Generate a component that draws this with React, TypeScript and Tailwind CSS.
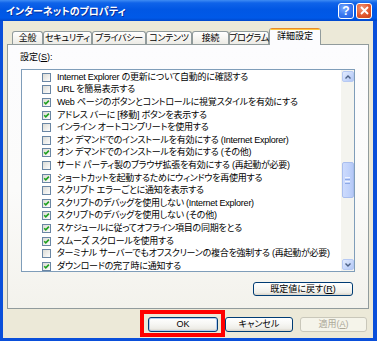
import React from 'react';

const items: [string, boolean][] = [
  ['Internet Explorer の更新について自動的に確認する', false],
  ['URL を簡易表示する', false],
  ['Web ページのボタンとコントロールに視覚スタイルを有効にする', true],
  ['アドレス バーに [移動] ボタンを表示する', true],
  ['インライン オートコンプリートを使用する', false],
  ['オン デマンドでのインストールを有効にする (Internet Explorer)', false],
  ['オン デマンドでのインストールを有効にする (その他)', true],
  ['サード パーティ製のブラウザ拡張を有効にする (再起動が必要)', false],
  ['ショートカットを起動するためにウィンドウを再使用する', true],
  ['スクリプト エラーごとに通知を表示する', false],
  ['スクリプトのデバッグを使用しない (Internet Explorer)', true],
  ['スクリプトのデバッグを使用しない (その他)', true],
  ['スケジュールに従ってオフライン項目の同期をとる', true],
  ['スムーズ スクロールを使用する', true],
  ['ターミナル サーバーでもオフスクリーンの複合を強制する (再起動が必要)', false],
  ['ダウンロードの完了時に通知する', true],
];

const tabs: [string, string][] = [
  ['全般', 'w-[31px]'],
  ['セキュリティ', 'w-[49px]'],
  ['プライバシー', 'w-[54px]'],
  ['コンテンツ', 'w-[46px]'],
  ['接続', 'w-[37px]'],
  ['プログラム', 'w-[40px]'],
];

function Check({ checked }: { checked: boolean }) {
  return (
    <svg width="9" height="9" viewBox="0 0 9 9" className="shrink-0">
      <defs>
        <linearGradient id="cbg" x1="0" y1="0" x2="1" y2="1">
          <stop offset="0" stopColor="#D9D9D3" />
          <stop offset="1" stopColor="#FFFFFF" />
        </linearGradient>
      </defs>
      <rect x="0.5" y="0.5" width="8" height="8" fill="url(#cbg)" stroke="#6A86A4" />
      {checked && (
        <path d="M2.2 4.2 L3.8 5.9 L6.9 2.6" stroke="#21A121" strokeWidth="1.6" fill="none" />
      )}
    </svg>
  );
}

function Arrow({ up }: { up: boolean }) {
  return (
    <div className="w-[12px] h-[11px] rounded-[2px] border border-[#B6C9F3] bg-[linear-gradient(135deg,#E3ECFE_0%,#C4D5FA_60%,#B3C7F4_100%)] flex items-center justify-center shrink-0">
      <svg width="6" height="4" viewBox="0 0 6 4">
        <path d={up ? 'M0.5 3.5 L3 1 L5.5 3.5' : 'M0.5 0.5 L3 3 L5.5 0.5'} stroke="#4D6185" strokeWidth="1.4" fill="none" />
      </svg>
    </div>
  );
}

export default function App() {
  return (
    <div className="w-[377px] h-[341px] flex flex-col bg-[#0A4FDA] overflow-hidden text-black font-['Liberation_Sans','Noto_Sans_CJK_JP',sans-serif] [font-feature-settings:'palt']">
      {/* Title bar */}
      <div className="h-[21px] shrink-0 flex items-center pl-[6px] pr-[5px] bg-[linear-gradient(180deg,#3F8CF3_0%,#0F63E9_14%,#0157E4_45%,#0059E8_85%,#0047CC_100%)]">
        <span className="flex-1 text-white font-bold text-[10px] leading-none font-['Noto_Sans_CJK_JP',sans-serif] [text-shadow:1px_1px_0_#0B2E9A]">
          インターネットのプロパティ
        </span>
        <div className="flex gap-[2px]">
          <div className="w-[16px] h-[16px] rounded-[3px] border border-white bg-[radial-gradient(circle_at_35%_30%,#7AAAFF_0%,#3A78F0_50%,#1F5BE0_100%)] flex items-center justify-center text-white font-bold text-[12px] leading-none font-['Liberation_Sans',sans-serif]">
            ?
          </div>
          <div className="w-[16px] h-[16px] rounded-[3px] border border-white bg-[radial-gradient(circle_at_35%_30%,#F0977A_0%,#E2582E_55%,#C4401A_100%)] flex items-center justify-center">
            <svg width="9" height="9" viewBox="0 0 9 9">
              <path d="M1 1 L8 8 M8 1 L1 8" stroke="white" strokeWidth="1.8" />
            </svg>
          </div>
        </div>
      </div>

      {/* Body */}
      <div className="flex-1 ml-[3px] mr-[4px] mb-[3px] bg-[#ECE9D8] flex flex-col pl-[4px] pt-[7px]">
        {/* Tabs */}
        <div className="flex items-end h-[16px] ml-[5px] relative z-10">
          {tabs.map(([t, w]) => (
            <div
              key={t}
              className={`${w} h-[13px] shrink-0 rounded-t-[3px] border-t border-x border-[#919B9C] bg-[linear-gradient(180deg,#FFFFFF_0%,#F6F5F1_50%,#ECEBE6_100%)] flex items-center justify-center text-[9px] leading-none tracking-[-0.3px] whitespace-nowrap`}
            >
              {t}
            </div>
          ))}
          <div className="w-[52px] h-[17px] mb-[-1px] shrink-0 rounded-t-[3px] border-x border-[#919B9C] bg-[#FCFCFE] flex flex-col overflow-hidden">
            <div className="h-[1px] bg-[#E68B2C] shrink-0" />
            <div className="h-[1px] bg-[#FFC83C] shrink-0" />
            <div className="flex-1 flex items-center justify-center text-[9px] leading-none whitespace-nowrap pb-[2px]">
              詳細設定
            </div>
          </div>
        </div>

        {/* Panel */}
        <div className="h-[265px] w-[362px] shrink-0 border border-[#919B9C] bg-[linear-gradient(180deg,#FCFCFE_0%,#FBFBFA_55%,#F3F2EC_100%)] flex flex-col pl-[12px] pt-[7px]">
          <div className="text-[9px] leading-[10px] h-[10px]">
            設定(<span className="underline">S</span>):
          </div>
          <div className="mt-[7px] ml-[1px] w-[334px] h-[203px] border border-[#7F9DB9] bg-white flex overflow-hidden shrink-0">
            <div className="flex-1 pt-[1px] overflow-hidden">
              {items.map(([t, c]) => (
                <div key={t} className="h-[12.6px] flex items-center pl-[20px] gap-[6px] whitespace-nowrap text-[9px] leading-none tracking-[-0.25px]">
                  <Check checked={c} />
                  <span>{t}</span>
                </div>
              ))}
            </div>
            <div className="w-[13px] h-full bg-[#F4F4EF] flex flex-col items-center py-[1px] shrink-0">
              <Arrow up={true} />
              <div className="mt-[80px] w-[12px] h-[36px] rounded-[2px] border border-[#A9BEEE] bg-[linear-gradient(90deg,#CDDBFD_0%,#C0D2FB_60%,#B4C8F6_100%)] flex flex-col items-center justify-center gap-[1px] shrink-0">
                <div className="w-[5px] h-[1px] bg-[#EEF3FF]" />
                <div className="w-[5px] h-[1px] bg-[#8DA9E6]" />
                <div className="w-[5px] h-[1px] bg-[#EEF3FF]" />
                <div className="w-[5px] h-[1px] bg-[#8DA9E6]" />
              </div>
              <div className="flex-1" />
              <Arrow up={false} />
            </div>
          </div>
          <div className="mt-[10px] w-[334px] ml-[1px] flex justify-end pr-[2px]">
            <div className="w-[100px] h-[14px] rounded-[3px] border border-[#003C74] bg-[linear-gradient(180deg,#FFFFFF_0%,#F7F7F4_45%,#EEEDE8_80%,#D8D3C8_100%)] flex items-center justify-center text-[9px] leading-none">
              既定値に戻す(<span className="underline">R</span>)
            </div>
          </div>
        </div>

        {/* Footer buttons */}
        <div className="mt-[8px] flex justify-end gap-[7px] pr-[6px]">
          <div className="relative w-[70px] h-[15px]">
            <div className="w-full h-full rounded-[3px] border border-[#003C74] bg-[linear-gradient(180deg,#FFFFFF_0%,#F7F7F4_45%,#EEEDE8_80%,#D8D3C8_100%)] shadow-[inset_0_0_0_1px_#B4CCF2] flex items-center justify-center text-[9px] leading-none">
              OK
            </div>
            <div className="absolute -left-[8px] -top-[7px] -right-[7px] -bottom-[5px] border-[4px] border-[#FF0000]" />
          </div>
          <div className="w-[68px] h-[15px] rounded-[3px] border border-[#003C74] bg-[linear-gradient(180deg,#FFFFFF_0%,#F7F7F4_45%,#EEEDE8_80%,#D8D3C8_100%)] flex items-center justify-center text-[9px] leading-none">
            キャンセル
          </div>
          <div className="w-[67px] h-[15px] rounded-[3px] border border-[#C9C7BA] bg-[#F5F4EA] flex items-center justify-center text-[9px] leading-none text-[#ACA899]">
            適用(<span className="underline">A</span>)
          </div>
        </div>
      </div>
    </div>
  );
}
